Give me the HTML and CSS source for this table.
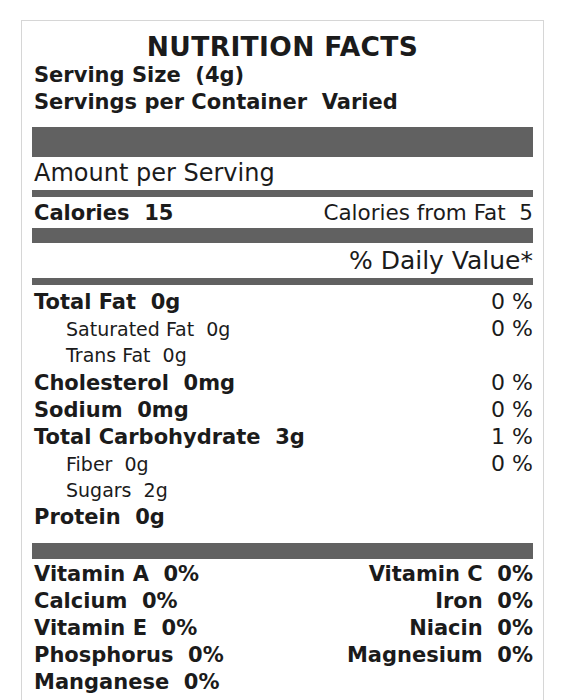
FILE: index.html
```html
<!DOCTYPE html>
<html>
<head>
<meta charset="utf-8">
<link rel="stylesheet" href="styles.css">
</head>
<body>
<div class="label">
  <h1 class="title">NUTRITION FACTS</h1>
  <div class="serving">Serving Size&nbsp; (4g)</div>
  <div class="serving">Servings per Container&nbsp; Varied</div>
  <div class="bar bar-xl"></div>
  <div class="amount">Amount per Serving</div>
  <div class="bar bar-s"></div>
  <div class="row calories"><span class="b">Calories&nbsp; 15</span><span class="big">Calories from Fat&nbsp; 5</span></div>
  <div class="bar bar-m"></div>
  <div class="dv">% Daily Value*</div>
  <div class="bar bar-s"></div>
  <div class="rows">
    <div class="row"><span class="b">Total Fat&nbsp; 0g</span><span class="pct">0 %</span></div>
    <div class="row sub"><span>Saturated Fat&nbsp; 0g</span><span class="pct">0 %</span></div>
    <div class="row sub"><span>Trans Fat&nbsp; 0g</span></div>
    <div class="row"><span class="b">Cholesterol&nbsp; 0mg</span><span class="pct">0 %</span></div>
    <div class="row"><span class="b">Sodium&nbsp; 0mg</span><span class="pct">0 %</span></div>
    <div class="row"><span class="b">Total Carbohydrate&nbsp; 3g</span><span class="pct">1 %</span></div>
    <div class="row sub"><span>Fiber&nbsp; 0g</span><span class="pct">0 %</span></div>
    <div class="row sub"><span>Sugars&nbsp; 2g</span></div>
    <div class="row"><span class="b">Protein&nbsp; 0g</span></div>
  </div>
  <div class="bar bar-l"></div>
  <div class="vitamins">
    <div class="row"><span class="b">Vitamin A&nbsp; 0%</span><span class="b">Vitamin C&nbsp; 0%</span></div>
    <div class="row"><span class="b">Calcium&nbsp; 0%</span><span class="b">Iron&nbsp; 0%</span></div>
    <div class="row"><span class="b">Vitamin E&nbsp; 0%</span><span class="b">Niacin&nbsp; 0%</span></div>
    <div class="row"><span class="b">Phosphorus&nbsp; 0%</span><span class="b">Magnesium&nbsp; 0%</span></div>
    <div class="row"><span class="b">Manganese&nbsp; 0%</span></div>
  </div>
</div>
</body>
</html>
```
FILE: styles.css
```css
html, body {
  margin: 0;
  padding: 0;
  background: #ffffff;
}
body {
  font-family: "DejaVu Sans", Verdana, sans-serif;
  color: #1b1b1b;
}
.label {
  box-sizing: border-box;
  margin: 20px 0 0 21px;
  width: 523px;
  height: 680px;
  border: 1px solid #d6d6d6;
  border-bottom: none;
  padding: 11px 10px 0 10px;
}
.title {
  margin: 0;
  text-align: center;
  font-size: 26.5px;
  letter-spacing: 0.35px;
  line-height: 30px;
  font-weight: bold;
}
.serving {
  font-size: 21px;
  font-weight: bold;
  line-height: 27px;
  padding-left: 2px;
}
.bar {
  background: #616161;
}
.bar-xl { height: 30px; margin-top: 11px; }
.bar-s { height: 7px; }
.bar-m { height: 15px; }
.bar-l { height: 16px; margin-top: 12px; }
.amount {
  font-size: 24px;
  line-height: 33px;
  padding-left: 2px;
}
.dv {
  font-size: 25px;
  line-height: 35px;
  text-align: right;
}
.row {
  display: flex;
  justify-content: space-between;
  align-items: baseline;
  height: 27px;
  font-size: 19px;
  line-height: 27px;
  padding-left: 2px;
}
.calories {
  height: 31px;
  line-height: 31px;
}
.big {
  font-size: 21.5px;
}
.pct {
  font-size: 22px;
}
.rows {
  padding-top: 3px;
}
.sub {
  padding-left: 34px;
}
.b {
  font-weight: bold;
  font-size: 21px;
}
.vitamins {
  padding-top: 2px;
}
```
